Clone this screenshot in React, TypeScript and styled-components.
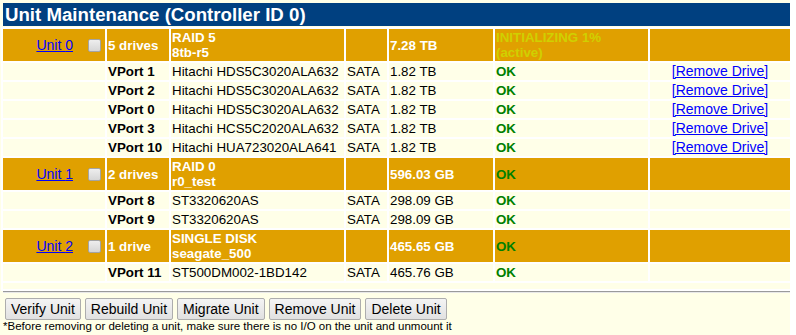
import styled, { createGlobalStyle } from 'styled-components';

const GlobalStyle = createGlobalStyle`
  body {
    margin: 0;
    background: #ffffff;
    font-family: "Liberation Sans", Arial, sans-serif;
  }
`;

const ORANGE = '#e0a000';
const CREAM = '#ffffe8';

type Drive = {
  port: string;
  model: string;
  size: string;
  removable?: boolean;
};

type Unit = {
  id: number;
  drives: string;
  type: string;
  name: string;
  size: string;
  status: string;
  statusNote?: string;
  members: Drive[];
};

const units: Unit[] = [
  {
    id: 0,
    drives: '5 drives',
    type: 'RAID 5',
    name: '8tb-r5',
    size: '7.28 TB',
    status: 'INITIALIZING 1%',
    statusNote: '(active)',
    members: [
      { port: 'VPort 1', model: 'Hitachi HDS5C3020ALA632', size: '1.82 TB', removable: true },
      { port: 'VPort 2', model: 'Hitachi HDS5C3020ALA632', size: '1.82 TB', removable: true },
      { port: 'VPort 0', model: 'Hitachi HDS5C3020ALA632', size: '1.82 TB', removable: true },
      { port: 'VPort 3', model: 'Hitachi HCS5C2020ALA632', size: '1.82 TB', removable: true },
      { port: 'VPort 10', model: 'Hitachi HUA723020ALA641', size: '1.82 TB', removable: true },
    ],
  },
  {
    id: 1,
    drives: '2 drives',
    type: 'RAID 0',
    name: 'r0_test',
    size: '596.03 GB',
    status: 'OK',
    members: [
      { port: 'VPort 8', model: 'ST3320620AS', size: '298.09 GB' },
      { port: 'VPort 9', model: 'ST3320620AS', size: '298.09 GB' },
    ],
  },
  {
    id: 2,
    drives: '1 drive',
    type: 'SINGLE DISK',
    name: 'seagate_500',
    size: '465.65 GB',
    status: 'OK',
    members: [{ port: 'VPort 11', model: 'ST500DM002-1BD142', size: '465.76 GB' }],
  },
];

const colWidths = [102, 62, 173, 41, 104, 153, 140];

const Page = styled.div`
  width: 790px;
  min-height: 335px;
  box-sizing: border-box;
  padding: 3px 0 0 3px;
  background: ${CREAM};
`;

const Title = styled.div`
  height: 23px;
  line-height: 23px;
  padding-left: 2px;
  background: #004080;
  color: #ffffff;
  font-size: 18.67px;
  font-weight: bold;
  white-space: nowrap;
`;

const Table = styled.table`
  width: 791px;
  margin: 1px 0 0 -2px;
  border-spacing: 2px;
  table-layout: fixed;
  background: #ffffff;
`;

const Col = styled.col<{ $w: number }>`
  width: ${({ $w }) => $w}px;
`;

const Cell = styled.td<{ $unit?: boolean; $center?: boolean }>`
  padding: 1px;
  background: ${({ $unit }) => ($unit ? ORANGE : CREAM)};
  color: ${({ $unit }) => ($unit ? '#ffffff' : '#000000')};
  font-size: 13.33px;
  line-height: 15px;
  vertical-align: middle;
  text-align: ${({ $center }) => ($center ? 'center' : 'left')};
  white-space: nowrap;
  overflow: hidden;
`;

const Bold = styled.span`
  font-weight: bold;
`;

const Status = styled.span<{ $warn?: boolean }>`
  display: block;
  font-weight: bold;
  color: ${({ $warn }) => ($warn ? '#d0d000' : '#008000')};
`;

const UnitHead = styled.div`
  display: flex;
  justify-content: flex-end;
  align-items: center;
  gap: 15px;
  padding-right: 3px;
`;

const Link = styled.a`
  color: #0000ff;
  text-decoration: underline;
  font-size: 14px;
  cursor: pointer;
`;

const Check = styled.input`
  appearance: none;
  width: 13px;
  height: 13px;
  margin: 0;
  border: 1px solid #a4a4a4;
  border-radius: 2px;
  background: linear-gradient(#eeeeee, #d6d6d6);
  box-sizing: border-box;
`;

const Spacer = styled.td`
  height: 6px;
  padding: 0;
  background: ${CREAM};
`;

const Divider = styled.div`
  width: 787px;
  border-top: 1px solid #9a9a9a;
  border-bottom: 1px solid #e8e8e8;
`;

const Actions = styled.div`
  display: flex;
  gap: 4px;
  margin-top: 5px;
  padding-left: 2px;
`;

const Button = styled.button`
  height: 22px;
  padding: 1px 5px;
  border: 1px solid #adadad;
  border-radius: 2px;
  background: linear-gradient(#f4f4f4, #e1e1e1);
  color: #000000;
  font-family: "Liberation Sans", Arial, sans-serif;
  font-size: 14px;
  cursor: pointer;
`;

const Note = styled.div`
  font-size: 11.5px;
  line-height: 13px;
  color: #000000;
  white-space: nowrap;
`;

const UnitRows = ({ unit }: { unit: Unit }) => (
  <>
    <tr>
      <Cell $unit>
        <UnitHead>
          <Link>Unit {unit.id}</Link>
          <Check type="checkbox" />
        </UnitHead>
      </Cell>
      <Cell $unit>
        <Bold>{unit.drives}</Bold>
      </Cell>
      <Cell $unit>
        <Bold>
          {unit.type}
          <br />
          {unit.name}
        </Bold>
      </Cell>
      <Cell $unit />
      <Cell $unit>
        <Bold>{unit.size}</Bold>
      </Cell>
      <Cell $unit>
        <Status $warn={!!unit.statusNote}>{unit.status}</Status>
        {unit.statusNote && <Status $warn>{unit.statusNote}</Status>}
      </Cell>
      <Cell $unit />
    </tr>
    {unit.members.map((d) => (
      <tr key={d.port}>
        <Cell />
        <Cell>
          <Bold>{d.port}</Bold>
        </Cell>
        <Cell>{d.model}</Cell>
        <Cell>SATA</Cell>
        <Cell>{d.size}</Cell>
        <Cell>
          <Status>OK</Status>
        </Cell>
        <Cell $center>{d.removable && <Link>[Remove Drive]</Link>}</Cell>
      </tr>
    ))}
  </>
);

export default function App() {
  return (
    <Page>
      <GlobalStyle />
      <Title>Unit Maintenance (Controller ID 0)</Title>
      <Table>
        <colgroup>
          {colWidths.map((w, i) => (
            <Col key={i} $w={w} />
          ))}
        </colgroup>
        <tbody>
          {units.map((u) => (
            <UnitRows key={u.id} unit={u} />
          ))}
          <tr>
            <Spacer colSpan={7} />
          </tr>
        </tbody>
      </Table>
      <Divider />
      <Actions>
        <Button>Verify Unit</Button>
        <Button>Rebuild Unit</Button>
        <Button>Migrate Unit</Button>
        <Button>Remove Unit</Button>
        <Button>Delete Unit</Button>
      </Actions>
      <Note>*Before removing or deleting a unit, make sure there is no I/O on the unit and unmount it</Note>
    </Page>
  );
}
